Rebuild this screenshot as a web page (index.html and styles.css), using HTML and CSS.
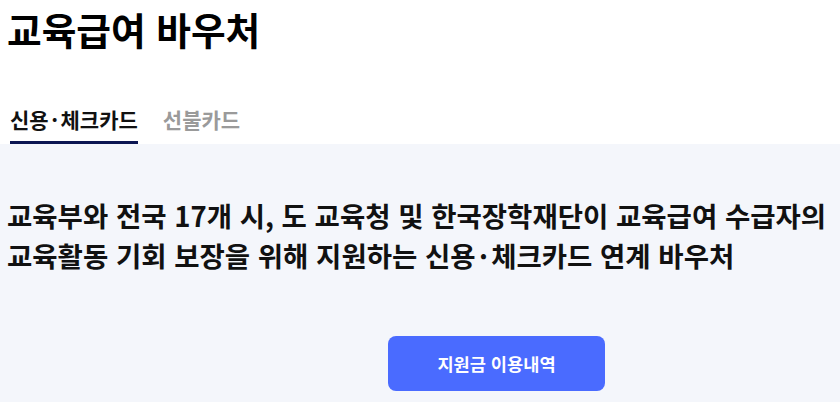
FILE: index.html
```html
<!DOCTYPE html>
<html lang="ko">
<head>
<meta charset="utf-8">
<link rel="stylesheet" href="styles.css">
</head>
<body>
<header class="top">
  <h1 class="title">교육급여 바우처</h1>
  <nav class="tabs">
    <a class="tab active">신용<span class="dot">·</span>체크카드</a>
    <a class="tab">선불카드</a>
  </nav>
</header>
<section class="panel">
  <p class="desc">교육부와 전국 17개 시, 도 교육청 및 한국장학재단이 교육급여 수급자의<br>교육활동 기회 보장을 위해 지원하는 신용<span class="dot">·</span>체크카드 연계 바우처</p>
  <button class="btn">지원금 이용내역</button>
</section>
</body>
</html>
```

FILE: styles.css
```css
html, body {
  margin: 0;
  padding: 0;
  background: #ffffff;
  font-family: "Noto Sans CJK KR", "Noto Sans", sans-serif;
  color: #111111;
}
.top {
  padding: 0 10px 0 7px;
}
.title {
  margin: 0;
  font-size: 37.7px;
  line-height: 58px;
  font-weight: 700;
  color: #000000;
}
.tabs {
  display: flex;
  gap: 25px;
  margin-top: 46px;
  padding-left: 3px;
}
.tab {
  display: block;
  font-size: 21px;
  line-height: 30px;
  font-weight: 700;
  color: #9a9a9a;
  padding-bottom: 7px;
  border-bottom: 3px solid transparent;
}
.tab.active {
  color: #111111;
  border-bottom-color: #0b1552;
}
.dot {
  margin: 0 0.12em;
}
.panel {
  background: #f4f6fb;
  padding: 51px 8px 40px 7px;
  min-height: 300px;
}
.desc {
  margin: 0;
  font-size: 27.5px;
  line-height: 40px;
  font-weight: 600;
  color: #111111;
}
.desc .dot {
  margin: 0 0.12em;
}
.btn {
  display: block;
  margin: 61px 0 0 381px;
  width: 217px;
  height: 55px;
  border: none;
  border-radius: 8px;
  background: #4a6bff;
  color: #ffffff;
  font-family: "Noto Sans CJK KR", "Noto Sans", sans-serif;
  font-size: 17.6px;
  font-weight: 700;
}
```
